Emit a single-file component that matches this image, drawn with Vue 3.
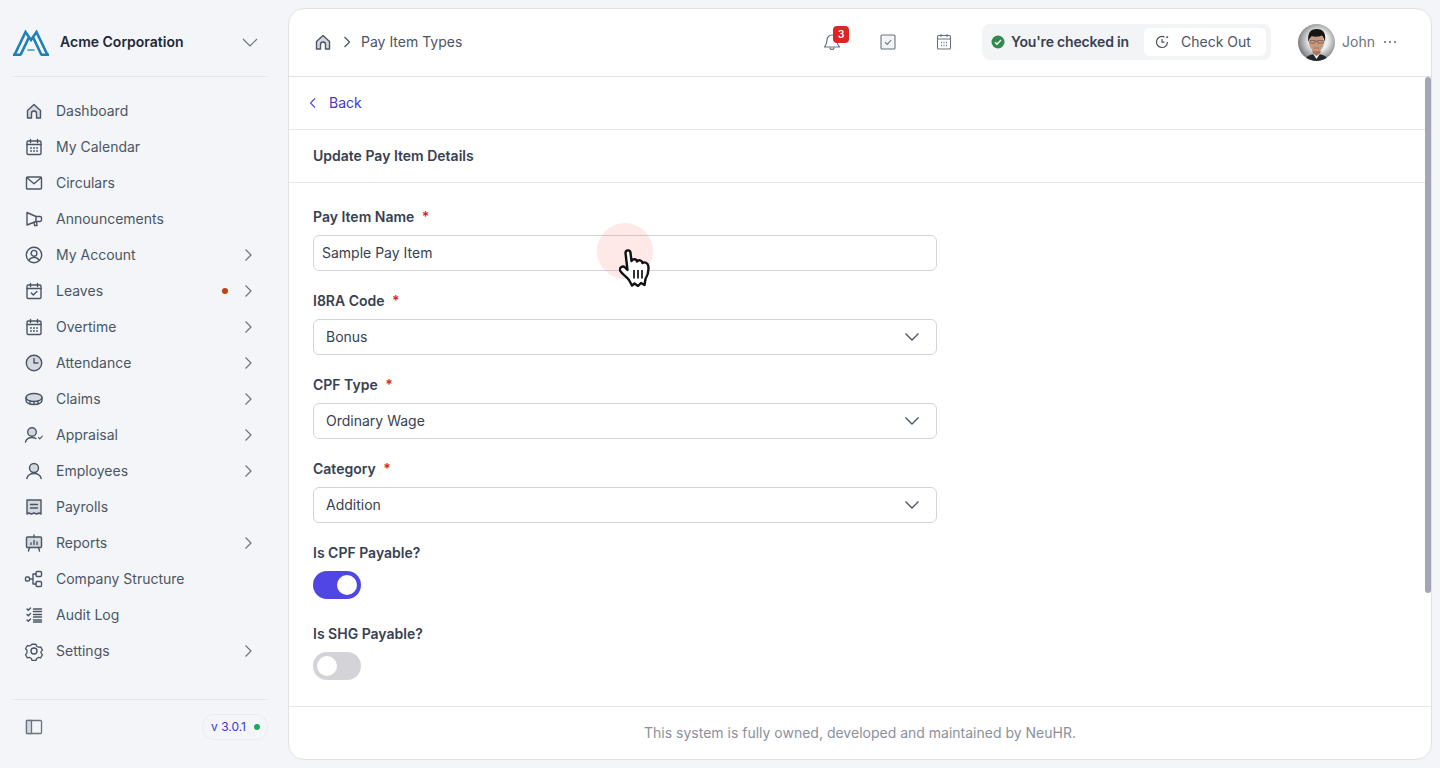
<script setup>
const icons = {
  home: '<path d="M3.500 9.500 10 3.500l6.500 6V17h-4v-4.500a2.500 2.500 0 0 0-5 0V17h-4z" fill="#d5d8de"/>',
  calendar: '<rect x="3" y="4" width="14" height="13.500" rx="1.200"/><path d="M3 7.500h14M6.500 2.500v3M13.500 2.500v3"/><path d="M7 11h.01M10 11h.01M13 11h.01M7 14h.01M10 14h.01M13 14h.01" stroke-width="1.800"/>',
  mail: '<rect x="2.500" y="4" width="15" height="12" rx="1"/><path d="m3 4.800 7 6 7-6"/>',
  megaphone: '<path d="M3 3.500v12.500l9-3.500h4a1.500 1.500 0 0 0 1.500-1.500V9A1.500 1.500 0 0 0 16 7.500h-4z"/><path d="M12 7.500v5M10 13.500l.5 3h2.500l-.5-3.500"/>',
  user: '<circle cx="10" cy="10" r="7.700"/><circle cx="10" cy="8.300" r="2.900"/><path d="M4.800 15.300c1.200-2 3-2.900 5.200-2.900s4 .9 5.200 2.900"/>',
  leave: '<rect x="3" y="4" width="14" height="13.500" rx="1.200"/><path d="M3 7.500h14M6.500 2.500v3M13.500 2.500v3"/><path d="m7.300 12 2 2 3.600-3.600"/>',
  clock: '<circle cx="10" cy="10" r="7.700" fill="#d5d8de"/><path d="M10 5.500V10h4"/>',
  coin: '<ellipse cx="10" cy="8.500" rx="8" ry="4" fill="#d5d8de"/><path d="M2 8.500v3c0 2.200 3.600 4 8 4s8-1.800 8-4v-3M6 12v3.200M10 12.500v3M14 12v3.200"/>',
  appraisal: '<circle cx="8" cy="7" r="4.300" fill="#d5d8de"/><path d="M1.500 17c.9-3 3.400-4.500 6.500-4.500 1.500 0 2.800.3 3.900 1"/><path d="m14.500 12.500 1.300 1.300 2.500-2.600" stroke-width="1.100"/>',
  person: '<circle cx="10" cy="7" r="4.500" fill="#d5d8de"/><path d="M2.800 17.500c.9-3.300 3.700-5 7.200-5s6.300 1.700 7.200 5"/>',
  payroll: '<path d="M3 3h14v14l-2-1-2.300 1-2.700-1-2.700 1L5 16l-2 1z" fill="#d5d8de"/><path d="M6.500 7.500h7M6.500 11h7"/>',
  report: '<rect x="2.500" y="4" width="15" height="10.500" rx="1" fill="#d5d8de"/><path d="M10 2v2M5.500 14.500 4.500 18M14.500 14.500l1 3.500M7 11.500V10M10 11.500V7.500M13 11.500V9"/>',
  structure: '<rect x="1.500" y="8" width="4" height="4" rx="1.200"/><rect x="12" y="2.500" width="5.500" height="5" rx="1.200"/><rect x="12" y="12.500" width="5.500" height="5" rx="1.200"/><path d="M5.500 10H9M9 5v10M9 5h3M9 15h3"/>',
  audit: '<path d="m3 4 1.300 1.300L6.500 3M3 9.500l1.300 1.300 2.200-2.300M3 15l1.300 1.300 2.200-2.300M9.500 4h8M9.500 6.500h8M9.500 9.500h8M9.500 12h8M9.500 15h8M9.500 17h8"/>',
  gear: '<path d="M7.800 2.500h4.400l.7 2.200 2.200 1.200 2.300-.5 2 3.600-1.600 1.700v1.600l1.600 1.700-2 3.600-2.300-.5-2.200 1.200-.7 2.200H7.800l-.7-2.200-2.200-1.200-2.300.5-2-3.600 1.600-1.700V9.200L.6 7.500l2-3.600 2.300.5 2.200-1.200z" transform="translate(1 1) scale(.9)"/><circle cx="10" cy="10" r="3"/>'
}

const navItems = [
  { label: 'Dashboard', icon: 'home' },
  { label: 'My Calendar', icon: 'calendar' },
  { label: 'Circulars', icon: 'mail' },
  { label: 'Announcements', icon: 'megaphone' },
  { label: 'My Account', icon: 'user', arrow: true },
  { label: 'Leaves', icon: 'leave', arrow: true, dot: true },
  { label: 'Overtime', icon: 'calendar', arrow: true },
  { label: 'Attendance', icon: 'clock', arrow: true },
  { label: 'Claims', icon: 'coin', arrow: true },
  { label: 'Appraisal', icon: 'appraisal', arrow: true },
  { label: 'Employees', icon: 'person', arrow: true },
  { label: 'Payrolls', icon: 'payroll' },
  { label: 'Reports', icon: 'report', arrow: true },
  { label: 'Company Structure', icon: 'structure' },
  { label: 'Audit Log', icon: 'audit' },
  { label: 'Settings', icon: 'gear', arrow: true }
]

const selects = [
  { label: 'I8RA Code', value: 'Bonus' },
  { label: 'CPF Type', value: 'Ordinary Wage' },
  { label: 'Category', value: 'Addition' }
]
</script>

<template>
  <div class="app">
    <aside class="sidebar">
      <div class="brand">
        <svg class="logo" width="36" height="27" viewBox="0 0 36 27" fill="none" stroke="#1f7fb8" stroke-width="2.600" stroke-linejoin="miter">
          <path d="M1.500 26 12.500 3 18 11 23.500 3 34.500 26"/>
          <path d="M0 25.700h8M7.500 26 15.700 8.700M28.500 26 20.300 8.700M28 25.700h8"/>
          <path d="M14.500 21h7" stroke="#6aaed6" stroke-width="2"/>
        </svg>
        <span class="brand-name">Acme Corporation</span>
        <svg class="brand-caret" width="18" height="18" viewBox="0 0 18 18" fill="none" stroke="#6b7280" stroke-width="1.200"><path d="m2 6 7 7 7-7"/></svg>
      </div>

      <nav class="nav">
        <div v-for="item in navItems" :key="item.label" class="nav-item">
          <svg class="nav-icon" width="20" height="20" viewBox="0 0 20 20" fill="none" stroke="#4b5563" stroke-width="1.400" stroke-linecap="round" stroke-linejoin="round" v-html="icons[item.icon]"></svg>
          <span class="nav-label">{{ item.label }}</span>
          <span v-if="item.dot" class="nav-dot"></span>
          <svg v-if="item.arrow" width="10" height="14" viewBox="0 0 10 14" fill="none" stroke="#6b7280" stroke-width="1.200"><path d="m2.500 1.500 5.500 5.500-5.500 5.500"/></svg>
        </div>
      </nav>

      <div class="side-foot">
        <svg width="20" height="20" viewBox="0 0 20 20" fill="none" stroke="#6b7280" stroke-width="1.300"><rect x="2.500" y="3.500" width="15" height="13" rx="1" /><rect x="2.500" y="3.500" width="5" height="13" fill="#d5d8de"/></svg>
        <div class="version">v 3.0.1<span class="version-dot"></span></div>
      </div>
    </aside>

    <main class="panel">
      <header class="topbar">
        <svg width="20" height="20" viewBox="0 0 20 20" fill="none" stroke="#4b5563" stroke-width="1.400" stroke-linejoin="round" v-html="icons.home"></svg>
        <svg class="crumb-sep" width="10" height="14" viewBox="0 0 10 14" fill="none" stroke="#4b5563" stroke-width="1.300"><path d="m2.500 2 5 5-5 5"/></svg>
        <span class="crumb">Pay Item Types</span>

        <div class="top-right">
          <div class="bell">
            <svg width="20" height="20" viewBox="0 0 20 20" fill="none" stroke="#6b7280" stroke-width="1.200" stroke-linejoin="round"><path d="M10 3a5 5 0 0 0-5 5c0 4-1.500 6-2.500 7h15c-1-1-2.500-3-2.500-7a5 5 0 0 0-5-5z"/><path d="M8 15.500a2 2 0 0 0 4 0"/></svg>
            <span class="badge">3</span>
          </div>
          <svg class="top-icon" width="18" height="18" viewBox="0 0 18 18" fill="none" stroke="#6b7280" stroke-width="1.100"><rect x="2" y="2" width="14" height="14" rx="1" fill="#f3f4f6"/><path d="m6 9.200 2.200 2.200 4-4.400"/></svg>
          <svg class="top-icon" width="18" height="18" viewBox="0 0 18 18" fill="none" stroke="#6b7280" stroke-width="1.100"><rect x="2.500" y="2.500" width="13" height="13.500" rx="1"/><path d="M2.500 6h13M6 1v3M12 1v3"/><path d="M6 9.500h1M8.500 9.500h1M11 9.500h1M6 12.500h1M8.500 12.500h1M11 12.500h1" stroke-width="1.400"/></svg>

          <div class="checkin">
            <svg width="14" height="14" viewBox="0 0 14 14"><circle cx="7" cy="7" r="6.500" fill="#2f8a4c"/><path d="m4 7.200 2 2 4-4.200" fill="none" stroke="#fff" stroke-width="1.400"/></svg>
            <span class="checkin-text">You're checked in</span>
            <div class="checkout">
              <svg width="16" height="16" viewBox="0 0 16 16" fill="none" stroke="#4b5563" stroke-width="1.200"><path d="M13.500 8A5.500 5.500 0 1 1 10.500 3.100"/><path d="M8 5v3.200h2.500"/><path d="M12.200 3.200h2M13.200 2.200v2" stroke-width="1"/></svg>
              <span>Check Out</span>
            </div>
          </div>

          <svg class="avatar" width="37" height="37" viewBox="0 0 37 37">
            <defs>
              <radialGradient id="avatar-bg" cx="55%" cy="45%" r="58%"><stop offset=".45" stop-color="#ececec"/><stop offset="1" stop-color="#6f7274"/></radialGradient>
              <clipPath id="avatar-clip"><circle cx="18.500" cy="18.500" r="18.500"/></clipPath>
            </defs>
            <g clip-path="url(#avatar-clip)">
              <rect width="37" height="37" fill="url(#avatar-bg)"/>
              <path d="M7 37c1-5 5-7 11.500-7S29 32 30 37z" fill="#23272b"/>
              <path d="M14.500 29h8l-4 6z" fill="#f4f4f4"/>
              <path d="M14.500 24h8v5l-4 3-4-3z" fill="#a9775e"/>
              <ellipse cx="18.500" cy="18" rx="7.500" ry="9.500" fill="#c79a80"/>
              <path d="M10.500 18C9 9.500 12.500 5 18.800 5s9.700 4 8 13c-.7-3-1.500-5.500-3-6.500-3 1.500-7.500 1.500-10 .5-1.500 1-2.500 3-3.300 6z" fill="#161515"/>
              <path d="M12 16.500h5v2.600h-5zM20 16.500h5.200v2.600H20zM17 17.200h3" fill="none" stroke="#4a3f3a" stroke-width=".5"/>
              <path d="M16 24h5" stroke="#8f6250" stroke-width=".7"/>
            </g>
          </svg>
          <span class="user-name">John</span>
          <svg class="more" width="14" height="4" viewBox="0 0 14 4" fill="#6b7280"><circle cx="2" cy="2" r="1.100"/><circle cx="7" cy="2" r="1.100"/><circle cx="12" cy="2" r="1.100"/></svg>
        </div>
      </header>

      <div class="body">
        <div class="scroll">
          <div class="back-row">
            <svg width="8" height="12" viewBox="0 0 8 12" fill="none" stroke="#4f46e5" stroke-width="1.100"><path d="M6 1.500 1.500 6 6 10.500"/></svg>
            <span>Back</span>
          </div>
          <div class="title-row">Update Pay Item Details</div>

          <form class="form">
            <div class="field">
              <label>Pay Item Name <em>*</em></label>
              <input class="text-input" value="Sample Pay Item" />
            </div>
            <div v-for="sel in selects" :key="sel.label" class="field">
              <label>{{ sel.label }} <em>*</em></label>
              <div class="select">
                <span>{{ sel.value }}</span>
                <svg width="16" height="16" viewBox="0 0 16 16" fill="none" stroke="#4b5563" stroke-width="1.400"><path d="m1.500 4.500 6.500 6.500 6.500-6.500"/></svg>
              </div>
            </div>
            <div class="field switch-field">
              <label>Is CPF Payable?</label>
              <div class="switch on"><span class="knob"></span></div>
            </div>
            <div class="field switch-field">
              <label>Is SHG Payable?</label>
              <div class="switch"><span class="knob"></span></div>
            </div>
          </form>
          <div class="scrollbar"></div>
        </div>
        <footer class="foot">This system is fully owned, developed and maintained by NeuHR.</footer>
      </div>
    </main>

    <div class="cursor-ring"></div>
    <svg class="cursor-hand" width="33" height="38" viewBox="0 0 33 38">
      <path d="M6.500 4C6.500.5 11.500.5 11.500 4l1 8c1-2.500 5-2.500 5.500.5 1.500-2 5-1.500 5.500 1.500 2-1.500 5.500-.1 5.800 3 .7 5-1 10-2.800 13l-1 6-3.500-2-3 3-3.500-2.500-2.500 2-3-5.500c-2.500-3.500-7-6-9-9.500-1-2.500 2.500-5.500 5-3l2.500 2.500z" fill="#fff" stroke="#111" stroke-width="2.400" stroke-linejoin="round"/>
      <path d="M15 21v8.500M19 21v8.500M23 21v8.500" stroke="#111" stroke-width="1.700"/>
    </svg>
  </div>
</template>

<style>
html, body { margin: 0; overflow: hidden; }
</style>

<style scoped>
.app {
  position: relative;
  display: flex;
  width: 1440px;
  height: 768px;
  background: #f3f5f8;
  font-family: Inter, "Liberation Sans", sans-serif;
  font-size: 14px;
  line-height: 20px;
  color: #374151;
  box-sizing: border-box;
}

/* sidebar */
.sidebar {
  width: 288px;
  flex-shrink: 0;
  display: flex;
  flex-direction: column;
  padding: 8px 20px 8px 12px;
  box-sizing: border-box;
}
.brand {
  height: 69px;
  flex-shrink: 0;
  display: flex;
  align-items: center;
  border-bottom: 1px solid #e5e7eb;
  box-sizing: border-box;
}
.logo { margin: 0 11px 0 1px; }
.brand-name { font-weight: 600; color: #1f2937; }
.brand-caret { margin-left: auto; margin-right: 9px; }
.nav {
  flex: 1;
  padding-top: 16px;
}
.nav-item {
  height: 36px;
  display: flex;
  align-items: center;
  padding: 0 15px 0 12px;
  color: #4b5563;
}
.nav-icon { flex-shrink: 0; }
.nav-label { margin-left: 12px; flex: 1; }
.nav-dot {
  width: 6px;
  height: 6px;
  border-radius: 50%;
  background: #c2410c;
  margin-right: 15px;
}
.side-foot {
  height: 53px;
  flex-shrink: 0;
  display: flex;
  align-items: center;
  justify-content: space-between;
  padding: 0 0 7px 12px;
  border-top: 1px solid #e5e7eb;
  box-sizing: content-box;
}
.version {
  display: flex;
  align-items: center;
  gap: 8px;
  height: 24px;
  padding: 0 7px 0 8px;
  border: 1px solid #e9ebf0;
  border-radius: 12px;
  font-size: 12px;
  color: #4338ca;
}
.version-dot {
  width: 6px;
  height: 6px;
  border-radius: 50%;
  background: #22a55a;
}

/* main panel */
.panel {
  width: 1144px;
  height: 752px;
  margin-top: 8px;
  background: #fff;
  border: 1px solid #e0e2e6;
  border-radius: 16px;
  box-sizing: border-box;
  overflow: hidden;
  display: flex;
  flex-direction: column;
}
.topbar {
  height: 68px;
  flex-shrink: 0;
  display: flex;
  align-items: center;
  padding: 0 34px 1px 24px;
  border-bottom: 1px solid #e0e2e6;
  box-sizing: border-box;
}
.crumb-sep { margin-left: 9px; }
.crumb { margin-left: 9px; color: #4b5563; }
.top-right {
  margin-left: auto;
  display: flex;
  align-items: center;
}
.bell { position: relative; width: 20px; height: 20px; }
.badge {
  position: absolute;
  top: -6px;
  left: 11px;
  width: 16px;
  height: 17px;
  border-radius: 4px;
  background: #dc2626;
  color: #fff;
  font-size: 10px;
  font-weight: 600;
  line-height: 17px;
  text-align: center;
}
.top-icon { margin-left: 37px; }
.top-icon + .top-icon { margin-left: 38px; }
.checkin {
  margin-left: 29px;
  width: 289px;
  height: 36px;
  background: #f3f4f6;
  border-radius: 8px;
  display: flex;
  align-items: center;
  padding: 0 5px 0 9px;
  box-sizing: border-box;
}
.checkin-text { margin-left: 6px; font-weight: 600; letter-spacing: -0.18px; color: #374151; }
.checkout {
  margin-left: auto;
  width: 122px;
  height: 28px;
  background: #fff;
  border-radius: 6px;
  display: flex;
  align-items: center;
  gap: 11px;
  padding-left: 10px;
  box-sizing: border-box;
  color: #4b5563;
}
.avatar { margin-left: 27px; }
.user-name { margin-left: 7px; color: #6b7280; }
.more { margin-left: 8px; }

.body {
  flex: 1;
  min-height: 0;
  display: flex;
  flex-direction: column;
}
.scroll {
  position: relative;
  flex: 1;
  min-height: 0;
  overflow: hidden;
}
.scrollbar {
  position: absolute;
  top: 0;
  right: 0;
  width: 6px;
  height: 516px;
  border-radius: 3px;
  background: #a3a6b4;
}
.back-row {
  height: 53px;
  display: flex;
  align-items: center;
  gap: 12px;
  padding-left: 20px;
  border-bottom: 1px solid #e5e7eb;
  box-sizing: border-box;
  color: #4338ca;
}
.title-row {
  height: 53px;
  display: flex;
  align-items: center;
  padding-left: 24px;
  border-bottom: 1px solid #e5e7eb;
  box-sizing: border-box;
  font-weight: 600;
}
.form {
  padding: 24px 0 0 24px;
  width: 624px;
}
.field {
  height: 84px;
}
.field label {
  display: block;
  height: 20px;
  margin-bottom: 8px;
  font-weight: 600;
}
.field em {
  font-style: normal;
  color: #dc2626;
  margin-left: 4px;
}
.text-input, .select {
  width: 624px;
  height: 36px;
  border: 1px solid #d1d5db;
  border-radius: 6px;
  box-sizing: border-box;
  font: inherit;
  color: #374151;
  background: #fff;
}
.text-input { padding: 0 8px 2px; display: block; outline: none; }
.select {
  display: flex;
  align-items: center;
  justify-content: space-between;
  padding: 0 16px 0 12px;
}
.switch-field { height: 81px; }
.switch {
  width: 48px;
  height: 28px;
  border-radius: 14px;
  background: #d4d4d8;
  display: flex;
  align-items: center;
  padding: 0 4px;
  box-sizing: border-box;
}
.switch.on { background: #4f46e5; justify-content: flex-end; }
.knob {
  width: 20px;
  height: 20px;
  border-radius: 50%;
  background: #fff;
}
.foot {
  height: 53px;
  flex-shrink: 0;
  display: flex;
  align-items: center;
  justify-content: center;
  border-top: 1px solid #e5e7eb;
  box-sizing: border-box;
  color: #8b919c;
}

/* demo cursor overlay */
.cursor-ring {
  position: absolute;
  left: 597px;
  top: 223px;
  width: 56px;
  height: 56px;
  border-radius: 50%;
  background: rgba(248, 113, 113, 0.16);
  pointer-events: none;
}
.cursor-hand {
  position: absolute;
  left: 619px;
  top: 249px;
  pointer-events: none;
}
</style>
